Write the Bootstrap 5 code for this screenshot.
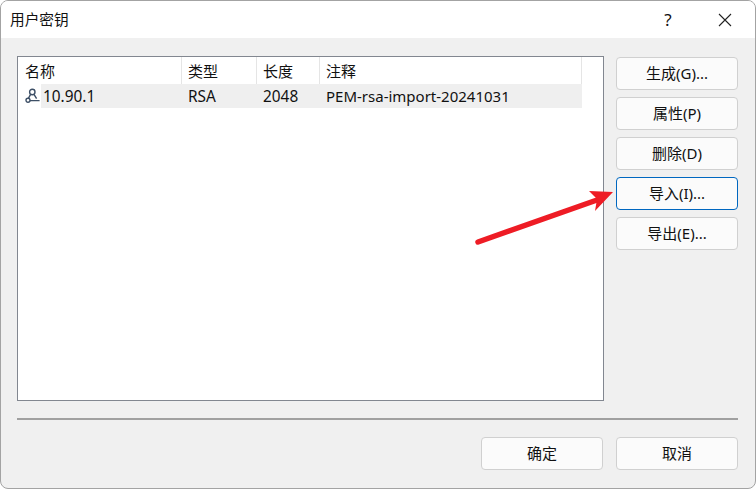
<!DOCTYPE html>
<html lang="zh-CN">
<head>
    <meta charset="UTF-8">
    <meta name="viewport" content="width=device-width, initial-scale=1.0">
    <title>用户密钥</title>
    <link href="https://cdn.jsdelivr.net/npm/bootstrap@5.3.0/dist/css/bootstrap.min.css" rel="stylesheet">
    <style>
        html, body { height: 100%; overflow: hidden; background: #fff; }
        body { font-family: "Noto Sans", "Noto Sans CJK SC", sans-serif; font-size: 15px; color: #111; }
        .dlg-window { position: relative; width: 756px; height: 489px; background: #f0f0f0; border: 1px solid #a3a3a3; border-radius: 8px; overflow: hidden; }
        .dlg-title { height: 37px; background: #fff; padding-left: 9px; }
        .dlg-title-text { font-size: 14.67px; line-height: 37px; }
        .dlg-help { width: 46px; font-size: 17px; text-align: center; margin-right: 11px; }
        .dlg-close { width: 46px; margin-right: 7px; }
        .dlg-main { padding: 18px 17px 0 16px; gap: 12px; height: 363px; }
        .key-box { width: 587px; height: 345px; flex: none; background: #fff; border: 1px solid #828790; }
        .key-head { height: 27px; line-height: 28px; }
        .key-row { height: 24px; line-height: 25px; }
        .key-col { flex: none; padding-left: 6px; white-space: nowrap; }
        .key-latin { font-size: 15.4px; }
        .key-note { font-size: 15px; }
        .key-head .key-col { border-right: 1px solid #e5e5e5; height: 27px; }
        .col-name { width: 164px; padding-left: 7px; }
        .col-type { width: 75px; }
        .col-len { width: 63px; }
        .col-note { width: 262px; }
        .key-icon { width: 23px; flex: none; padding-left: 7px; }
        .key-sel { background: #efefef; }
        .key-name { width: 141px; flex: none; padding-left: 2px; }
        .side-btns { gap: 7px; width: 122px; flex: none; padding-top: 1px; }
        .dlg-btn { width: 122px; height: 33px; padding: 0; font-size: 15px; line-height: 1; color: #111; background: #fbfbfb; border: 1px solid #d0d0d0; border-radius: 4px; }
        .dlg-btn-focus { border-color: #0067c0; }
        .dlg-sep { height: 2px; margin: 17px 17px 0 16px; background: #a0a0a0; }
        .dlg-foot { padding: 17px 17px 0 0; gap: 13px; }
        .red-arrow { position: absolute; left: 465px; top: 180px; }
    </style>
</head>
<body>
    <div class="dlg-window">
        <div class="dlg-title d-flex align-items-center">
            <div class="dlg-title-text flex-grow-1">用户密钥</div>
            <div class="dlg-help">?</div>
            <div class="dlg-close d-flex justify-content-center">
                <svg width="14" height="14" viewBox="0 0 14 14"><path d="M1 1 13 13M13 1 1 13" stroke="#222" stroke-width="1.1" fill="none"/></svg>
            </div>
        </div>

        <div class="dlg-main d-flex">
            <div class="key-box">
                <div class="key-head d-flex">
                    <div class="key-col col-name">名称</div>
                    <div class="key-col col-type">类型</div>
                    <div class="key-col col-len">长度</div>
                    <div class="key-col col-note">注释</div>
                </div>
                <div class="key-row d-flex">
                    <div class="key-icon d-flex align-items-center">
                        <svg width="15" height="16" viewBox="0 0 15 16" fill="none" stroke="#3d4f66" stroke-width="1.4">
                            <circle cx="7.3" cy="4" r="2.7"/>
                            <path d="M5.6 6.3 3.4 10.4M9 6.3 11.6 10.6"/>
                            <circle cx="3" cy="12.3" r="2"/>
                            <path d="M5 12.6H14.6"/>
                        </svg>
                    </div>
                    <div class="key-sel d-flex key-latin">
                        <div class="key-name">10.90.1</div>
                        <div class="key-col col-type">RSA</div>
                        <div class="key-col col-len">2048</div>
                        <div class="key-col col-note key-note">PEM-rsa-import-20241031</div>
                    </div>
                </div>
            </div>
            <div class="side-btns d-flex flex-column">
                <button type="button" class="btn dlg-btn">生成(G)...</button>
                <button type="button" class="btn dlg-btn">属性(P)</button>
                <button type="button" class="btn dlg-btn">删除(D)</button>
                <button type="button" class="btn dlg-btn dlg-btn-focus">导入(I)...</button>
                <button type="button" class="btn dlg-btn">导出(E)...</button>
            </div>
        </div>

        <div class="dlg-sep"></div>

        <div class="dlg-foot d-flex justify-content-end">
            <button type="button" class="btn dlg-btn">确定</button>
            <button type="button" class="btn dlg-btn">取消</button>
        </div>

        <svg class="red-arrow" width="150" height="70" viewBox="0 0 150 70">
            <path d="M12 61 131 19" stroke="#ee1c25" stroke-width="5.5" stroke-linecap="round" fill="none"/>
            <path d="M147 11 123 10 131 18 129 30Z" fill="#ee1c25"/>
        </svg>
    </div>
    <script src="https://cdn.jsdelivr.net/npm/bootstrap@5.3.0/dist/js/bootstrap.bundle.min.js"></script>
</body>
</html>
